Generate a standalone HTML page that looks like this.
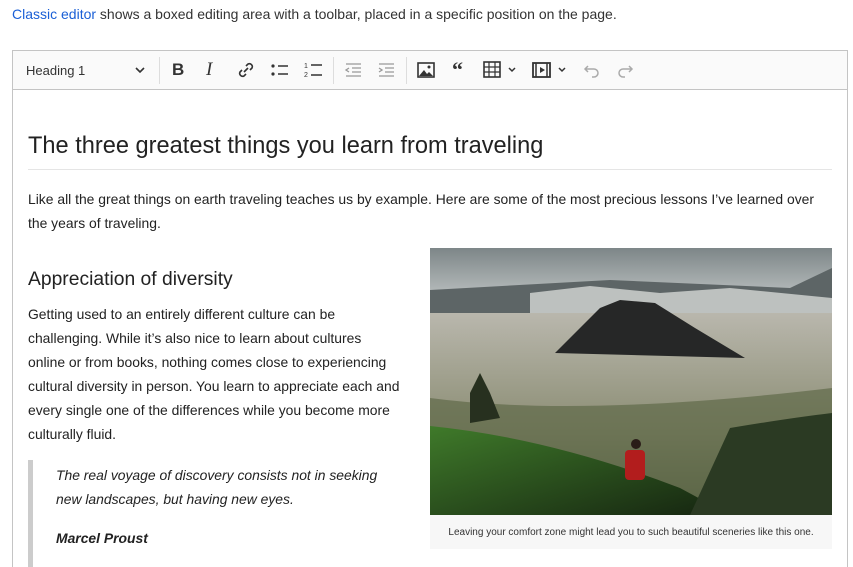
<!DOCTYPE html>
<html style="overflow:hidden;height:567px"><head><style>
body{margin:0;background:#fff;font-family:"Liberation Sans",sans-serif;color:#333;width:853px;height:567px;overflow:hidden;position:relative}
.top{position:absolute;left:12px;top:6px;font-size:14px;color:#333}
.top a{color:#1a5fd6;text-decoration:none}
.ed{position:absolute;left:12px;top:50px;width:834px;height:530px;border:1px solid #c4c4c4}
.tb{height:38px;background:#fafafa;border-bottom:1px solid #c4c4c4;position:relative}
.tb .i{position:absolute;top:0;height:38px;display:flex;align-items:center}
.sep{position:absolute;top:6px;width:1px;height:27px;background:#ddd}
.c{position:absolute;font-size:13.9px;color:#222;line-height:24px;white-space:nowrap}
h1{position:absolute;left:28px;top:133px;margin:0;font-weight:normal;font-size:23.6px;color:#222;width:804px;border-bottom:1px solid #e5e5e5;padding-bottom:9px}
</style></head><body>
<div class="top"><a>Classic editor</a> shows a boxed editing area with a toolbar, placed in a specific position on the page.</div>
<div class="ed"><div class="tb">
<div class="i" style="left:13px;font-size:13px;color:#333">Heading 1</div>
<div class="i" style="left:122px"><svg width="10" height="8"><path d="M1 2l4 4 4-4" stroke="#333" stroke-width="1.6" fill="none"/></svg></div>
<div class="sep" style="left:146px"></div>
<div class="i" style="left:159px;font-weight:bold;font-size:17px;color:#333">B</div>
<div class="i" style="left:193px;font-style:italic;font-family:'Liberation Serif';font-size:19px;color:#333">I</div>
<div class="i" style="left:224px"><svg width="18" height="18"><path d="M7 11l4-4M9 5l2-2a3 3 0 014 4l-2 2M9 13l-2 2a3 3 0 01-4-4l2-2" stroke="#333" stroke-width="1.6" fill="none"/></svg></div>
<div class="i" style="left:257px"><svg width="20" height="16"><circle cx="3" cy="4" r="1.6" fill="#333"/><circle cx="3" cy="12" r="1.6" fill="#333"/><path d="M8 4h10M8 12h10" stroke="#333" stroke-width="1.6"/></svg></div>
<div class="i" style="left:291px"><svg width="20" height="18"><text x="0" y="7" font-size="7" fill="#333">1</text><text x="0" y="16" font-size="7" fill="#333">2</text><path d="M7 4h11M7 14h11" stroke="#333" stroke-width="1.6"/></svg></div>
<div class="sep" style="left:320px"></div>
<div class="i" style="left:331px"><svg width="18" height="16"><path d="M2 2h15M8 6h9M8 10h9M2 14h15M5 6l-3 2 3 2" stroke="#999" stroke-width="1.3" fill="none"/></svg></div>
<div class="i" style="left:364px"><svg width="18" height="16"><path d="M2 2h15M8 6h9M8 10h9M2 14h15M2 6l3 2-3 2" stroke="#999" stroke-width="1.3" fill="none"/></svg></div>
<div class="sep" style="left:393px"></div>
<div class="i" style="left:404px"><svg width="18" height="16"><rect x="1" y="1" width="16" height="14" fill="none" stroke="#333" stroke-width="1.6"/><path d="M2 14l5-6 3 4 2-2 4 4z" fill="#333"/><circle cx="12" cy="5" r="1.5" fill="#333"/></svg></div>
<div class="i" style="left:439px;font-weight:bold;font-size:22px;color:#333;font-family:'Liberation Serif'">“</div>
<div class="i" style="left:470px"><svg width="40" height="18"><rect x="1" y="1" width="16" height="15" fill="none" stroke="#333" stroke-width="1.6"/><path d="M1 6h16M1 11h16M6 1v15M12 1v15" stroke="#333" stroke-width="1.2"/><path d="M26 7l3 3 3-3" stroke="#333" stroke-width="1.5" fill="none"/></svg></div>
<div class="i" style="left:519px"><svg width="40" height="18"><rect x="1" y="2" width="17" height="14" fill="none" stroke="#333" stroke-width="1.8"/><path d="M4 2v14M15 2v14" stroke="#333" stroke-width="1.5"/><path d="M8 6l5 3-5 3z" fill="#333"/><path d="M27 7l3 3 3-3" stroke="#333" stroke-width="1.5" fill="none"/></svg></div>
<div class="i" style="left:570px"><svg width="18" height="16"><path d="M5 4L2 7l3 3M2 7h9a4 4 0 010 8H9" stroke="#aaa" stroke-width="1.5" fill="none"/></svg></div>
<div class="i" style="left:603px"><svg width="18" height="16"><path d="M13 4l3 3-3 3M16 7H7a4 4 0 000 8h2" stroke="#aaa" stroke-width="1.5" fill="none"/></svg></div>
</div></div>
<h1>The three greatest things you learn from traveling</h1>
<div class="c" style="left:28px;top:187px">Like all the great things on earth traveling teaches us by example. Here are some of the most precious lessons I’ve learned over<br>the years of traveling.</div>
<div class="c" style="left:28px;top:266px;font-size:19.3px;line-height:28px">Appreciation of diversity</div>
<div class="c" style="left:28px;top:302px">Getting used to an entirely different culture can be<br>challenging. While it’s also nice to learn about cultures<br>online or from books, nothing comes close to experiencing<br>cultural diversity in person. You learn to appreciate each and<br>every single one of the differences while you become more<br>culturally fluid.</div>
<div style="position:absolute;left:28px;top:460px;width:5px;height:110px;background:#ccc"></div>
<div class="c" style="left:56px;top:463px;font-style:italic">The real voyage of discovery consists not in seeking<br>new landscapes, but having new eyes.</div>
<div class="c" style="left:56px;top:526px;font-style:italic;font-weight:bold">Marcel Proust</div>
<svg style="position:absolute;left:430px;top:248px" width="402" height="267">
<defs><linearGradient id="s" x1="0" y1="0" x2="0" y2="1"><stop offset="0" stop-color="#7d8688"/><stop offset=".25" stop-color="#cfd3d2"/><stop offset="1" stop-color="#aab"/></linearGradient>
<linearGradient id="p" x1="0" y1="0" x2="0" y2="1"><stop offset="0" stop-color="#b9b7ad"/><stop offset=".6" stop-color="#8a8c72"/><stop offset="1" stop-color="#4d5a3c"/></linearGradient>
<linearGradient id="g" x1="0" y1="0" x2="1" y2="1"><stop offset="0" stop-color="#3f7a2a"/><stop offset="1" stop-color="#152410"/></linearGradient></defs>
<rect width="402" height="267" fill="url(#s)"/>
<path d="M0 42L180 32 360 40 402 20V100H0z" fill="#5d6566"/>
<path d="M100 45 160 38 230 45 300 40 402 50V100H100z" fill="#d6d8d6" opacity=".8"/>
<rect y="65" width="402" height="202" fill="url(#p)"/>
<path d="M125 105 170 60 190 52 225 55 265 80 315 110 Z" fill="#262727"/>
<path d="M0 150 Q150 170 402 140V267H0z" fill="#5f6a48" opacity=".7"/>
<path d="M0 178 Q120 190 250 240 L300 267H0z" fill="url(#g)"/>
<path d="M300 180 Q360 170 402 165V267H260z" fill="#2b3a23"/>
<path d="M40 145l10-20 10 20 10 25-30 5z" fill="#27301f"/>
<rect x="195" y="202" width="20" height="30" fill="#b21d1d" rx="4"/>
<circle cx="206" cy="196" r="5" fill="#2a1d18"/>
</svg>
<div style="position:absolute;left:430px;top:515px;width:402px;height:34px;background:#f7f7f7;font-size:10px;color:#333;line-height:36px;text-align:center">Leaving your comfort zone might lead you to such beautiful sceneries like this one.</div>
</body></html>
